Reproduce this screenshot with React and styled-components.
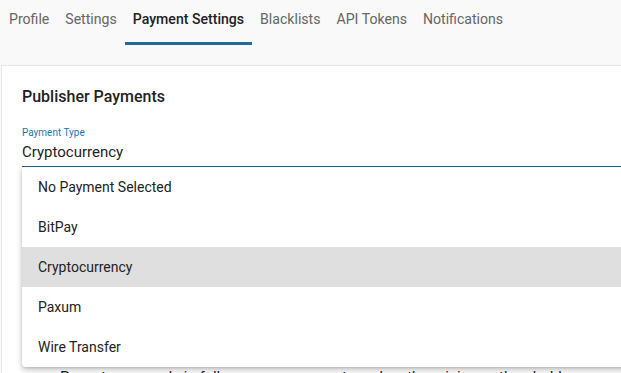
import React, { useState } from 'react'
import styled, { createGlobalStyle } from 'styled-components'

const Global = createGlobalStyle`
  html, body {
    margin: 0;
    padding: 0;
    background: #f9f9f9;
    font-family: Roboto, "Liberation Sans", sans-serif;
    overflow: hidden;
  }
`

const Page = styled.div`
  width: 900px;
  height: 373px;
  overflow: hidden;
`

const Tabs = styled.nav`
  display: flex;
  padding-left: 1px;
  height: 45px;
`

const Tab = styled.div`
  padding: 0 8px 4px;
  height: 45px;
  box-sizing: border-box;
  display: flex;
  align-items: center;
  font-size: 14.1px;
  font-weight: ${p => (p.active ? 500 : 400)};
  color: ${p => (p.active ? '#222' : '#666')};
  border-bottom: 3px solid ${p => (p.active ? '#1f6c98' : 'transparent')};
`

const Card = styled.section`
  margin-top: 20px;
  margin-left: 1px;
  background: #fff;
  border-top: 1px solid #e6e6e6;
  border-left: 1px solid #e6e6e6;
  padding: 20px 0 0 20px;
  height: 400px;
`

const Title = styled.h2`
  margin: 0;
  font-size: 16px;
  font-weight: 500;
  color: #222;
  line-height: 22px;
`

const Field = styled.div`
  position: relative;
  margin-top: 18px;
`

const Label = styled.div`
  font-size: 10px;
  color: #2276b0;
  line-height: 13px;
`

const Value = styled.div`
  font-size: 15px;
  color: #222;
  line-height: 20px;
  padding: 3px 0 4px;
  border-bottom: 2px solid #1a6592;
`

const Menu = styled.ul`
  position: absolute;
  top: 41px;
  left: 0;
  width: 760px;
  margin: 0;
  padding: 0;
  list-style: none;
  background: #fff;
  box-shadow: 0 3px 6px rgba(0, 0, 0, 0.22), 0 1px 3px rgba(0, 0, 0, 0.12);
  border-radius: 0 0 4px 4px;
  z-index: 2;
`

const Option = styled.li`
  height: 40px;
  display: flex;
  align-items: center;
  padding-left: 16px;
  font-size: 14px;
  color: #222;
  background: ${p => (p.selected ? '#dfdfdf' : 'transparent')};
`

const Note = styled.p`
  margin: 199px 0 0 38px;
  font-size: 15px;
  line-height: 20px;
  color: #222;
`

const options = ['No Payment Selected', 'BitPay', 'Cryptocurrency', 'Paxum', 'Wire Transfer']

export default function App() {
  const [type, setType] = useState('Cryptocurrency')
  const tabs = ['Profile', 'Settings', 'Payment Settings', 'Blacklists', 'API Tokens', 'Notifications']

  return (
    <Page>
      <Global />
      <Tabs>
        {tabs.map(t => (
          <Tab key={t} active={t === 'Payment Settings'}>{t}</Tab>
        ))}
      </Tabs>
      <Card>
        <Title>Publisher Payments</Title>
        <Field>
          <Label>Payment Type</Label>
          <Value>{type}</Value>
          <Menu>
            {options.map(o => (
              <Option key={o} selected={o === type} onClick={() => setType(o)}>{o}</Option>
            ))}
          </Menu>
          <Note>Payouts are made in full once your account reaches the minimum threshold.</Note>
        </Field>
      </Card>
    </Page>
  )
}
